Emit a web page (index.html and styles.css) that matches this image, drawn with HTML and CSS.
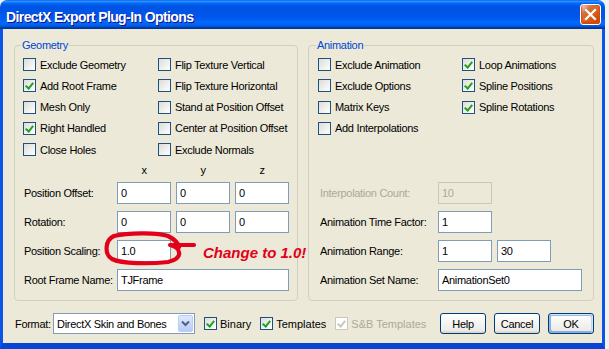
FILE: index.html
```html
<!DOCTYPE html>
<html lang="en">
<head>
    <meta charset="UTF-8">
    <title>DirectX Export Plug-In Options</title>
    <link rel="stylesheet" href="styles.css">
</head>
<body>
<div class="window">
    <!-- title bar -->
    <div class="titlebar">
        <span class="title">DirectX Export Plug-In Options</span>
        <span class="close">
            <svg width="13" height="13" viewBox="0 0 13 13"><path d="M2 2 L11 11 M11 2 L2 11" stroke="#fff" stroke-width="2.2" stroke-linecap="square"/></svg>
        </span>
    </div>

    <div class="client">
        <div class="groups">
            <!-- Geometry -->
            <fieldset class="group geo">
                <legend>Geometry</legend>
                <div class="checks">
                    <label class="chk"><span class="box"></span>Exclude Geometry</label>
                    <label class="chk"><span class="box"></span>Flip Texture Vertical</label>
                    <label class="chk"><span class="box on"></span>Add Root Frame</label>
                    <label class="chk"><span class="box"></span>Flip Texture Horizontal</label>
                    <label class="chk"><span class="box"></span>Mesh Only</label>
                    <label class="chk"><span class="box"></span>Stand at Position Offset</label>
                    <label class="chk"><span class="box on"></span>Right Handled</label>
                    <label class="chk"><span class="box"></span>Center at Position Offset</label>
                    <label class="chk"><span class="box"></span>Close Holes</label>
                    <label class="chk"><span class="box"></span>Exclude Normals</label>
                </div>
                <div class="fields">
                    <span></span><span class="axis">x</span><span class="axis">y</span><span class="axis">z</span>
                    <span class="lbl">Position Offset:</span>
                    <input class="txt" value="0"><input class="txt" value="0"><input class="txt" value="0">
                    <span class="lbl">Rotation:</span>
                    <input class="txt" value="0"><input class="txt" value="0"><input class="txt" value="0">
                    <span class="lbl">Position Scaling:</span>
                    <div class="note-cell">
                        <input class="txt" value="1.0">
                        <!-- red marker drawn over the dialog -->
                        <svg class="ring" width="100" height="40" viewBox="0 0 100 40">
                            <path d="M94 17 L70 17 C80 19, 85 30, 68 34 C50 36, 22 36, 12 31 C4 26, 5 12, 14 8 C30 4, 60 5, 68 8 C74 11, 78 15, 79 19" fill="none" stroke="#e2001a" stroke-width="4.2" stroke-linecap="round" stroke-linejoin="round"/>
                        </svg>
                        <span class="note">Change to 1.0!</span>
                    </div>
                    <span></span><span></span>
                    <span class="lbl">Root Frame Name:</span>
                    <input class="txt wide" value="TJFrame">
                </div>
            </fieldset>

            <!-- Animation -->
            <fieldset class="group anim">
                <legend>Animation</legend>
                <div class="checks">
                    <label class="chk"><span class="box"></span>Exclude Animation</label>
                    <label class="chk"><span class="box on"></span>Loop Animations</label>
                    <label class="chk"><span class="box"></span>Exclude Options</label>
                    <label class="chk"><span class="box on"></span>Spline Positions</label>
                    <label class="chk"><span class="box"></span>Matrix Keys</label>
                    <label class="chk"><span class="box on"></span>Spline Rotations</label>
                    <label class="chk"><span class="box"></span>Add Interpolations</label>
                </div>
                <div class="fields">
                    <span class="axis full"></span>
                    <span class="lbl off">Interpolation Count:</span>
                    <input class="txt" value="10" disabled><span></span><span></span>
                    <span class="lbl">Animation Time Factor:</span>
                    <input class="txt" value="1"><span></span><span></span>
                    <span class="lbl">Animation Range:</span>
                    <input class="txt" value="1"><input class="txt" value="30"><span></span>
                    <span class="lbl">Animation Set Name:</span>
                    <input class="txt wide" value="AnimationSet0">
                </div>
            </fieldset>
        </div>

        <!-- bottom row -->
        <div class="footer">
            <span class="fmt">Format:</span>
            <div class="combo">
                <span class="combo-text">DirectX Skin and Bones</span>
                <span class="drop">
                    <svg width="9" height="7" viewBox="0 0 9 7"><path d="M1 1.5 L4.5 5 L8 1.5" fill="none" stroke="#4d6185" stroke-width="2"/></svg>
                </span>
            </div>
            <label class="chk"><span class="box on"></span>Binary</label>
            <label class="chk"><span class="box on"></span>Templates</label>
            <label class="chk off"><span class="box on"></span>S&amp;B Templates</label>
            <div class="buttons">
                <button class="btn">Help</button>
                <button class="btn">Cancel</button>
                <button class="btn default">OK</button>
            </div>
        </div>
    </div>
</div>
</body>
</html>
```

FILE: styles.css
```css
/* page and base font */
body {
    margin: 0;
    background: #f2f2f2;
    font-family: "Liberation Sans", Arial, sans-serif;
    font-size: 11px;
    letter-spacing: -0.3px;
    color: #000;
    overflow: hidden;
}

/* window frame */
.window {
    width: 605px;
}
.titlebar {
    height: 29px;
    display: flex;
    align-items: flex-start;
    border-radius: 7px 7px 0 0;
    background: linear-gradient(180deg, #0058ee 0%, #3593ff 4%, #288eff 6%, #127dff 8%, #036ffc 10%, #0262ee 14%, #0057e5 20%, #0054e3 24%, #0055eb 56%, #005bf5 66%, #026afe 76%, #0062ef 86%, #0052d6 92%, #0040ab 94%, #003092 100%);
}
.title {
    margin: 9px 0 0 6px;
    font-size: 14px;
    line-height: 17px;
    font-weight: bold;
    letter-spacing: -0.6px;
    color: #fff;
    text-shadow: 1px 1px #0f1089;
}
.close {
    margin: 4px 4px 0 auto;
    width: 19px;
    height: 19px;
    border: 1px solid #fff;
    border-radius: 3px;
    display: flex;
    align-items: center;
    justify-content: center;
    background: radial-gradient(circle at 90% 90%, #cc4600 0%, #dc6527 55%, #cd7546 70%, #ffccb2 90%, #fff 100%);
    box-shadow: inset 0 -1px 2px 1px #da4600;
}
.client {
    background: #ece9d8;
    border-left: 3px solid #0a55e6;
    border-right: 3px solid #0a55e6;
    border-bottom: 6px solid #0845d4;
    padding: 10px 8px 9px 11px;
}

/* group boxes */
.groups {
    display: grid;
    grid-template-columns: 284px 286px;
    column-gap: 10px;
}
.group {
    margin: 0;
    min-width: 0;
    border: 1px solid #d0d0bf;
    border-radius: 4px;
    padding: 2px 8px 9px;
}
.group.anim { padding-left: 9px; }
.group legend {
    padding: 0 1px;
    margin-left: -2px;
    line-height: 13px;
    color: #0046d5;
}

/* check boxes */
.checks {
    display: grid;
    grid-template-columns: 135px 1fr;
    grid-template-rows: repeat(5, 21.25px);
}
.anim .checks { grid-template-columns: 144px 1fr; }
.chk {
    display: flex;
    align-items: center;
    gap: 4px;
    white-space: nowrap;
}
.box {
    width: 11px;
    height: 11px;
    border: 1px solid #1c5180;
    background: linear-gradient(135deg, #dcdcd7, #fff);
    flex: none;
    position: relative;
}
.box.on::after {
    content: "";
    position: absolute;
    left: 3px;
    top: 1px;
    width: 3px;
    height: 6px;
    border: solid #21a121;
    border-width: 0 2px 2px 0;
    transform: rotate(40deg);
}
.chk.off { color: #aca899; }
.chk.off .box { border-color: #cac8bb; background: #fff; }
.chk.off .box.on::after { border-color: #cac8bb; }

/* text fields */
.fields {
    display: grid;
    grid-template-columns: 89px 54px 54px 54px;
    grid-template-rows: 14px repeat(4, 22px);
    column-gap: 5px;
    row-gap: 7px;
    margin-top: 1px;
    align-items: center;
}
.anim .fields { grid-template-columns: 115px 54px 54px 26px; }
.axis {
    text-align: center;
    padding-top: 3px;
}
.axis.full { grid-column: 1 / -1; }
.lbl {
    padding-left: 1px;
    white-space: nowrap;
}
.anim .lbl { padding-left: 2px; }
.lbl.off { color: #aca899; }
.txt {
    box-sizing: border-box;
    width: 100%;
    height: 22px;
    margin: 0;
    padding: 0 3px;
    border: 1px solid #7f9db9;
    background: #fff;
    font: inherit;
    letter-spacing: inherit;
    color: #000;
    outline: none;
}
.txt:disabled {
    background: #ece9d8;
    border-color: #c9c7ba;
    color: #aca899;
}
.txt.wide { grid-column: 2 / -1; }

/* red hand-drawn note */
.note-cell {
    position: relative;
    height: 22px;
}
.ring {
    position: absolute;
    left: -17px;
    top: -12px;
}
.note {
    position: absolute;
    left: 86px;
    top: 4px;
    white-space: nowrap;
    font-size: 15px;
    line-height: 17px;
    font-weight: bold;
    font-style: italic;
    letter-spacing: 0;
    color: #e2001a;
}

/* bottom row */
.footer {
    display: flex;
    align-items: center;
    height: 21px;
    margin-top: 12px;
}
.fmt {
    width: 39px;
    padding-left: 1px;
    box-sizing: border-box;
}
.combo {
    box-sizing: border-box;
    width: 142px;
    height: 21px;
    border: 1px solid #7f9db9;
    background: #fff;
    display: flex;
    align-items: center;
    padding: 0 1px 0 3px;
}
.combo-text { flex: 1; white-space: nowrap; }
.drop {
    width: 15px;
    height: 17px;
    border-radius: 2px;
    border: 1px solid #b9cdf8;
    box-sizing: border-box;
    background: linear-gradient(180deg, #e0e9fd, #b7cbf7);
    display: flex;
    align-items: center;
    justify-content: center;
}
.footer .chk {
    margin-left: 9px;
    gap: 3px;
    letter-spacing: 0;
}
.buttons {
    margin-left: auto;
    display: flex;
    gap: 8px;
}
.btn {
    width: 46px;
    height: 21px;
    padding: 0;
    border: 1px solid #003c74;
    border-radius: 3px;
    background: linear-gradient(180deg, #fff, #ecebe5 86%, #d8d0c4);
    font: inherit;
    letter-spacing: inherit;
    color: #000;
}
.btn.default {
    box-shadow: inset -1px 1px #cee7ff, inset 1px 2px #98b8ea, inset -2px 2px #bcd4f6, inset 1px -1px #89ade4, inset 2px -2px #89ade4;
}
```
